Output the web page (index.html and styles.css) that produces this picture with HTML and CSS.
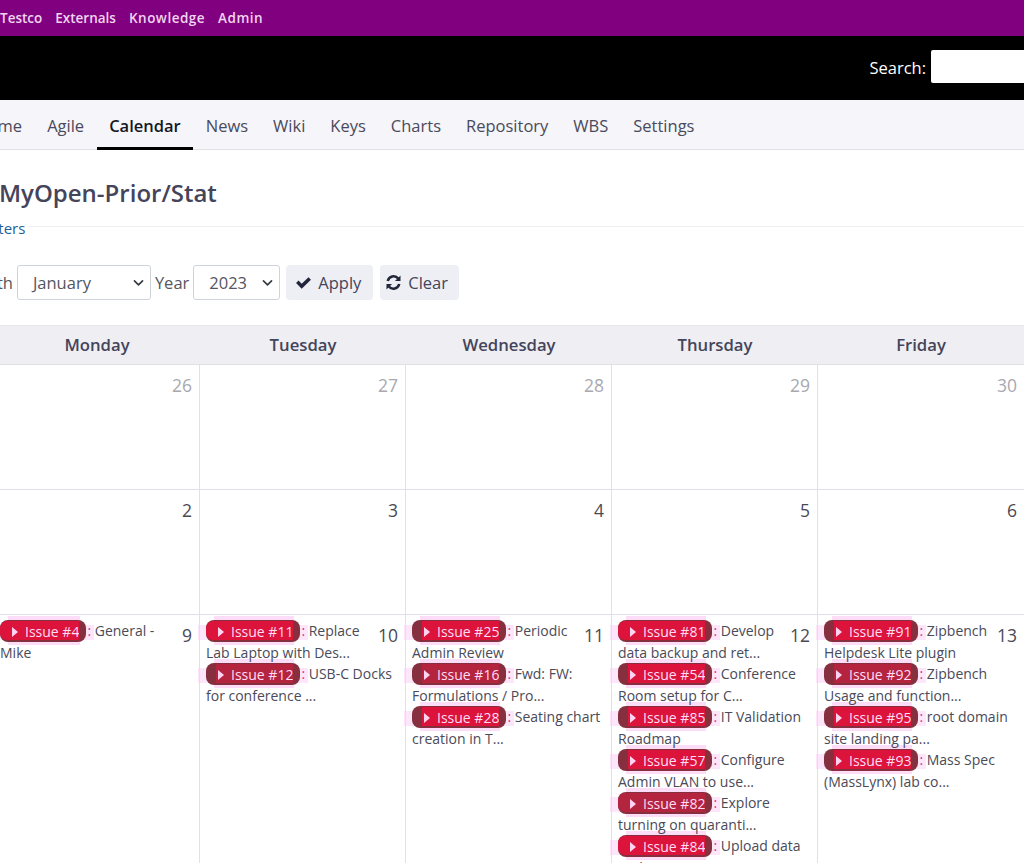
FILE: index.html
```html
<!DOCTYPE html>
<html lang="en">
<head>
<meta charset="utf-8">
<title>Calendar</title>
<link rel="stylesheet" href="styles.css">
</head>
<body>
<div class="top-bar">
  <a>Testco</a><a>Externals</a><a class="wide">Knowledge</a><a class="wide">Admin</a>
</div>
<div class="brand-bar">
  <label class="search-label">Search:</label>
  <input class="search-input" type="text">
</div>
<nav class="tabs">
  <a class="tab">Home</a><a class="tab">Agile</a><a class="tab active">Calendar</a><a class="tab">News</a><a class="tab">Wiki</a><a class="tab">Keys</a><a class="tab">Charts</a><a class="tab">Repository</a><a class="tab">WBS</a><a class="tab">Settings</a>
</nav>
<main class="content">
  <h1 class="title">MyOpen-Prior/Stat</h1>
  <div class="filters"><a class="filters-link">Filters</a><span class="filters-line"></span></div>
  <form class="controls">
    <span class="ctl-label">Month</span>
    <div class="select month"><span>January</span><svg viewBox="0 0 16 16"><path d="M3 6l5 5 5-5" fill="none" stroke="#343a40" stroke-width="2" stroke-linecap="round" stroke-linejoin="round"/></svg></div>
    <span class="ctl-label">Year</span>
    <div class="select year"><span>2023</span><svg viewBox="0 0 16 16"><path d="M3 6l5 5 5-5" fill="none" stroke="#343a40" stroke-width="2" stroke-linecap="round" stroke-linejoin="round"/></svg></div>
    <button class="btn apply" type="button"><svg class="ico" viewBox="0 0 16 16"><path d="M1 8.5l2.3-2.3 3 3L12.7 3 15 5.3 6.3 13.8z" fill="#22263a"/></svg>Apply</button>
    <button class="btn clear" type="button"><svg class="ico" viewBox="0 0 16 16"><path d="M2.6 6.6A5.6 5.6 0 0 1 12.4 4.2M13.4 9.4A5.6 5.6 0 0 1 3.6 11.8" fill="none" stroke="#22263a" stroke-width="2.4"/><path d="M14.6 1.4v5.2H9.4zM1.4 14.6V9.4h5.2z" fill="#22263a"/></svg>Clear</button>
  </form>
  <div class="calendar">
    <div class="head">Monday</div><div class="head">Tuesday</div><div class="head">Wednesday</div><div class="head">Thursday</div><div class="head">Friday</div>

    <div class="cell muted"><div class="day">26</div></div>
    <div class="cell muted"><div class="day">27</div></div>
    <div class="cell muted"><div class="day">28</div></div>
    <div class="cell muted"><div class="day">29</div></div>
    <div class="cell muted"><div class="day">30</div></div>

    <div class="cell"><div class="day">2</div></div>
    <div class="cell"><div class="day">3</div></div>
    <div class="cell"><div class="day">4</div></div>
    <div class="cell"><div class="day">5</div></div>
    <div class="cell"><div class="day">6</div></div>

    <div class="cell"><div class="day">9</div>
      <a class="issue"><span class="badge"><span class="fill"><i class="tri"></i>Issue #4</span></span><em>:</em> General - Mike</a>
    </div>
    <div class="cell"><div class="day">10</div>
      <a class="issue"><span class="badge"><span class="fill"><i class="tri"></i>Issue #11</span></span><em>:</em> Replace Lab Laptop with Des...</a>
      <a class="issue"><span class="badge inset dim"><span class="fill"><i class="tri"></i>Issue #12</span></span><em>:</em> USB-C Docks for conference ...</a>
    </div>
    <div class="cell"><div class="day">11</div>
      <a class="issue"><span class="badge inset"><span class="fill"><i class="tri"></i>Issue #25</span></span><em>:</em> Periodic Admin Review</a>
      <a class="issue"><span class="badge inset dim"><span class="fill"><i class="tri"></i>Issue #16</span></span><em>:</em> Fwd: FW: Formulations / Pro...</a>
      <a class="issue"><span class="badge inset"><span class="fill"><i class="tri"></i>Issue #28</span></span><em>:</em> Seating chart creation in T...</a>
    </div>
    <div class="cell"><div class="day">12</div>
      <a class="issue"><span class="badge"><span class="fill"><i class="tri"></i>Issue #81</span></span><em>:</em> Develop data backup and ret...</a>
      <a class="issue"><span class="badge inset"><span class="fill"><i class="tri"></i>Issue #54</span></span><em>:</em> Conference Room setup for C...</a>
      <a class="issue"><span class="badge inset"><span class="fill"><i class="tri"></i>Issue #85</span></span><em>:</em> IT Validation Roadmap</a>
      <a class="issue"><span class="badge inset"><span class="fill"><i class="tri"></i>Issue #57</span></span><em>:</em> Configure Admin VLAN to use...</a>
      <a class="issue"><span class="badge dim"><span class="fill"><i class="tri"></i>Issue #82</span></span><em>:</em> Explore turning on quaranti...</a>
      <a class="issue"><span class="badge"><span class="fill"><i class="tri"></i>Issue #84</span></span><em>:</em> Upload data and run Fusion...</a>
    </div>
    <div class="cell"><div class="day">13</div>
      <a class="issue"><span class="badge inset"><span class="fill"><i class="tri"></i>Issue #91</span></span><em>:</em> Zipbench Helpdesk Lite plugin</a>
      <a class="issue"><span class="badge inset dim"><span class="fill"><i class="tri"></i>Issue #92</span></span><em>:</em> Zipbench Usage and function...</a>
      <a class="issue"><span class="badge inset"><span class="fill"><i class="tri"></i>Issue #95</span></span><em>:</em> root domain site landing pa...</a>
      <a class="issue"><span class="badge inset"><span class="fill"><i class="tri"></i>Issue #93</span></span><em>:</em> Mass Spec (MassLynx) lab co...</a>
    </div>
  </div>
</main>
</body>
</html>
```
FILE: styles.css
```css
html, body { margin: 0; padding: 0; height: 863px; overflow: hidden; }
html { background: #fff; }
body { font-family: "Open Sans", "Noto Sans", sans-serif; color: #44445a; font-size: 16.5px; width: 1024px; }

.top-bar { height: 36px; background: #800080; display: flex; align-items: center; gap: 13px; font-size: 13.5px; font-weight: 600; color: #f0d4f0; }
.wide { letter-spacing: 0.5px; }
.brand-bar { height: 61px; padding-bottom: 3px; background: #000; display: flex; align-items: center; justify-content: flex-end; color: #fff; }
.search-label { margin: 2px 5px 0 0; }
.search-input { width: 93px; height: 33px; box-sizing: border-box; border: 0; border-radius: 2px 0 0 2px; background: #fff; padding: 0; flex: none; }

.tabs { height: 50px; box-sizing: border-box; background: #f5f5fa; border-bottom: 1px solid #dee2e6; display: flex; margin-left: -37px; width: 1100px; color: #4a4a5c; }
.tab { padding: 0 12.5px; line-height: 51px; height: 50px; box-sizing: border-box; }
.tab.active { color: #16181d; font-weight: 600; border-bottom: 3px solid #000; }

.title { font-size: 24px; font-weight: 600; color: #44445a; margin: 0 0 0 -1px; padding-top: 26px; line-height: 34px; }
.filters { display: flex; margin-top: 8px; height: 20px; font-size: 15px; line-height: 20px; }
.filters-link { color: #1d6296; margin-left: -17px; flex: none; }
.filters-line { flex: 1; height: 1px; margin: 8px 0 0 4px; background: #eceef0; }

.controls { display: flex; align-items: center; gap: 4px; height: 35px; margin: 27px 0 0 -38px; width: 1100px; color: #55555f; }
.ctl-label { flex: none; }
.select { flex: none; height: 35px; box-sizing: border-box; border: 1px solid #ced4da; border-radius: 3px; display: flex; align-items: center; justify-content: space-between; padding: 0 5px 0 15px; background: #fff; }
.select svg { width: 13px; height: 13px; }
.month { width: 134px; }
.year { width: 87px; }
.btn { flex: none; height: 35px; border: 0; border-radius: 4px; background: #eeeff4; font: inherit; color: #44445a; display: flex; align-items: center; gap: 6px; }
.apply { width: 87px; margin-left: 2px; padding: 0 0 0 9px; }
.clear { width: 79px; margin-left: 3px; padding: 0 0 0 5px; }
.ico { width: 17px; height: 17px; flex: none; }

.calendar { display: grid; grid-template-columns: repeat(5, 206px); grid-template-rows: 39px 125px 125px auto; width: 1030px; border-top: 1px solid #e4e4ea; margin: 25px 0 0 -6px; }
.head { background: #eeeef3; text-align: center; font-weight: 600; font-size: 16.7px; line-height: 38px; color: #44445a; border-bottom: 1px solid #dee2e6; }
.cell { border-right: 1px solid #dee2e6; border-bottom: 1px solid #dee2e6; box-sizing: border-box; padding: 5px 7px 0 6px; font-size: 14px; line-height: 21.5px; }
.cell:nth-child(5n) { border-right: 0; }
.day { float: right; height: 21px; font-size: 17.5px; line-height: 30px; margin-left: 6px; color: #4a4a55; }
.muted .day { color: #a9a9af; }

.issue { display: block; color: #4a4a58; }
.badge { position: relative; display: inline-block; height: 21.5px; border-radius: 8px; background: #86303f; color: #ffdcf6; padding-right: 7px; }
.badge::before { content: ""; position: absolute; z-index: -1; left: -8px; right: -8px; top: 5px; bottom: 2px; background: #fde6fa; }
.badge::after { content: ""; position: absolute; z-index: -1; left: 8px; right: 6px; top: -4px; bottom: -3px; background: #fddcf8; }
.fill { display: inline-block; background: #dc143c; padding-left: 12px; border-radius: 7px 0 0 7px; height: 19px; line-height: 21.5px; margin-top: 1px; vertical-align: top; overflow: hidden; }
.inset { padding-left: 10px; }
.inset .fill { padding-left: 2px; border-radius: 0; }
.dim .fill { background: #b4243f; }
.tri { display: inline-block; width: 0; height: 0; border-left: 6px solid #ffd4f2; border-top: 5px solid transparent; border-bottom: 5px solid transparent; margin-right: 7px; }
.issue em { font-style: normal; color: #e0308a; padding-left: 1px; }
```
